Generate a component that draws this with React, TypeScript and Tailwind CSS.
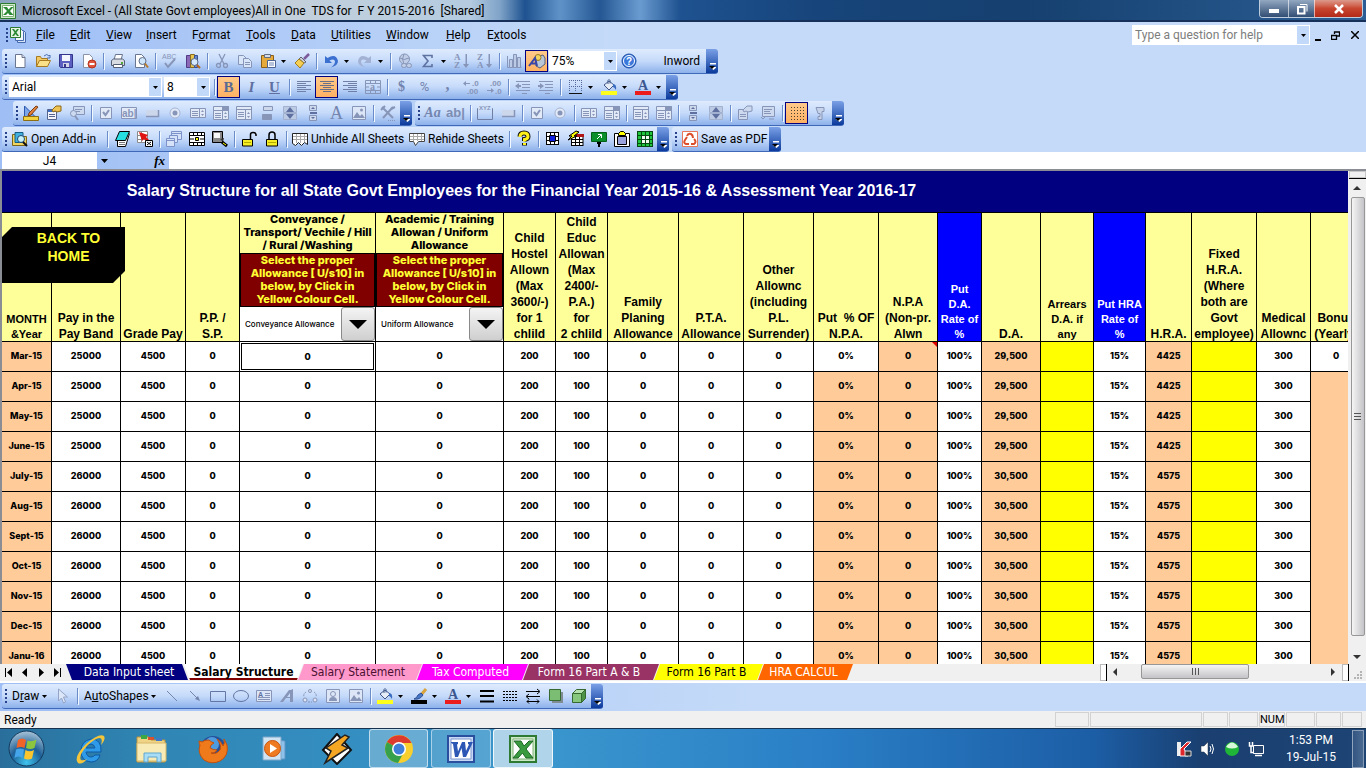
import type { ReactNode } from "react";

const G = "#8795b8";

const icons: Record<string, ReactNode> = {
  new: <><path d="M3.5 1.5h6.5l3 3v10h-9.5z" fill="#fff" stroke="#6a7590" /><path d="M10 1.5v3h3" fill="#d5dcea" stroke="#6a7590" /></>,
  open: <><path d="M1.5 13.5v-10h4l1 2h6v3" fill="#f3c963" stroke="#a77a22" /><path d="M1.5 13.5l3-6h11l-3 6z" fill="#fbe08a" stroke="#a77a22" /><path d="M9 3q3-3 5 0l1-1v3h-3" fill="none" stroke="#4a6fb0" /></>,
  save: <><path d="M1.5 1.5h13v13h-12l-1-1z" fill="#5b5fc0" stroke="#33368a" /><path d="M4 2h8v6h-8z" fill="#f3f5ff" /><path d="M5 10h6v4h-6z" fill="#d3d6e6" /><path d="M6 11h2v3h-2z" fill="#33368a" /></>,
  perm: <><path d="M2.5 1.5h6l3 3v10h-9z" fill="#fff" stroke="#8a93a8" /><circle cx="11" cy="11" r="4" fill="#e2553c" stroke="#b5331d" /><path d="M8.500 10h5v2h-5z" fill="#fff" /></>,
  print: <><path d="M4 7l1.5-5.500h7l-1.500 5.500z" fill="#fff" stroke="#687590" /><path d="M1.500 7.500l2-1.500h9l2 1.500v5h-13z" fill="#d8dbe2" stroke="#555f74" /><path d="M3.500 11.500h9v3h-9z" fill="#fff" stroke="#555f74" /><path d="M11 9h2v2h-2z" fill="#4fa83a" /></>,
  preview: <><path d="M2.500 1.500h6l3 3v10h-9z" fill="#fff" stroke="#6a7590" /><circle cx="9.500" cy="8" r="3.500" fill="#cfe6fa" stroke="#5d6c88" /><path d="M12 10.500l3 4" stroke="#b57a2d" strokeWidth="2" /></>,
  spell: <><text x="0" y="6" fontSize="7" fill={G} fontFamily="Liberation Sans">ABC</text><path d="M3 10l3 4 7-8" fill="none" stroke={G} strokeWidth="2" /></>,
  research: <><path d="M1.500 2.500h4v12h-4z" fill="#8b69b9" stroke="#533a85" /><path d="M5.500 1.500h4v13h-4z" fill="#e6c44e" stroke="#8b6b1e" /><path d="M9.500 2.500h3v12h-3z" fill="#6a86ce" stroke="#33508f" /><circle cx="9.500" cy="9" r="3.500" fill="#d6e9fb" stroke="#566a8c" /><path d="M12 12l3 3" stroke="#b5651d" strokeWidth="2" /></>,
  cut: <g fill="none" stroke={G} strokeWidth="1.300"><path d="M5 1l5 10M11 1l-5 10" /><circle cx="4.500" cy="12.500" r="2" /><circle cx="11.500" cy="12.500" r="2" /></g>,
  copy: <g fill="#d9e5f8" stroke={G}><path d="M1.500 2.500h5l3 3v6h-8z" /><path d="M6.500 5.500h5l3 3v6h-8z" /><path d="M8 9.500h5M8 11.500h5" /></g>,
  paste: <><path d="M1.500 2.500h12v12h-12z" fill="#e6a93c" stroke="#8c5f16" /><path d="M4.500 1.500h6v3h-6z" fill="#d8dce6" stroke="#616b80" /><path d="M7.500 7.500h8v7h-8z" fill="#fff" stroke="#4c6493" /><path d="M9 10h5M9 12h5" stroke="#6d86b6" /></>,
  painter: <><path d="M15 1l-5 5" stroke="#7c5a9c" strokeWidth="2.500" /><path d="M7 4l5 5-2 1-5-4z" fill="#cfcfd8" stroke="#5f6270" /><path d="M5 6l5 4-4 5-5-5z" fill="#f4cf54" stroke="#a17b1c" /></>,
  undo: <path d="M2 3v7h7L6.500 7.500q5-2.500 5.500 1 0 3-4 6 7-2 7-6.500Q13 0 4.500 5z" fill="#3b6fd0" />,
  redo: <path d="M14 3v7H7l2.500-2.500q-5-2.500-5.500 1 0 3 4 6-7-2-7-6.500Q3 0 11.500 5z" fill="#a3b2d4" />,
  link: <g fill="#c0cde6" stroke={G}><circle cx="7.500" cy="6" r="5" /><path d="M3 5q4 3 9 0M7 1q-3 5 0 10" fill="none" /><rect x="4.500" y="10.500" width="5" height="4" rx="2" /><rect x="9.500" y="10.500" width="5" height="4" rx="2" /></g>,
  sum: <path d="M12 5V2.500H3.500L8 8l-4.500 5.500H12V11" fill="none" stroke="#5f73a2" strokeWidth="1.600" />,
  az: <g fill={G}><text x="0" y="7" fontSize="9" fontFamily="Liberation Serif" fontWeight="bold">A</text><text x="0" y="15" fontSize="9" fontFamily="Liberation Serif" fontWeight="bold">Z</text><path d="M11.500 1h1.500v10h2l-3 4-3-4h2.500z" /></g>,
  za: <g fill={G}><text x="0" y="7" fontSize="9" fontFamily="Liberation Serif" fontWeight="bold">Z</text><text x="0" y="15" fontSize="9" fontFamily="Liberation Serif" fontWeight="bold">A</text><path d="M11.500 1h1.500v10h2l-3 4-3-4h2.500z" /></g>,
  chart: <g fill="#bccae6" stroke={G}><path d="M1.500 3v11.500h14" fill="none" /><path d="M3.500 6.500h3v8h-3zM7.500 1.500h3v13h-3zM11.500 4.500h3v10h-3z" /></g>,
  drawing: <><path d="M10 3l4-1 2 3v6l-5 4-4-2V6z" fill="#b9c6d8" stroke="#54607c" /><circle cx="9" cy="4.500" r="3" fill="#f2d462" stroke="#9a7b1f" /><path d="M0 13L6 5l2 8M2 10.500h5" fill="none" stroke="#3a46a8" strokeWidth="2" /></>,
  help: <><circle cx="8" cy="8" r="7" fill="#3a78dc" stroke="#1f4fa8" /><circle cx="8" cy="8" r="5.500" fill="none" stroke="#fff" /><text x="5" y="12" fontSize="10" fontWeight="bold" fill="#fff" fontFamily="Liberation Sans">?</text></>,
  left: <path d="M1 2.500h14M1 4.500h9M1 6.500h14M1 8.500h9M1 10.500h14M1 12.500h9" stroke="#6f7fa6" />,
  center: <path d="M1 2.500h14M4 4.500h8M1 6.500h14M4 8.500h8M1 10.500h14M4 12.500h8" stroke="#6a6f88" />,
  right: <path d="M1 2.500h14M6 4.500h9M1 6.500h14M6 8.500h9M1 10.500h14M6 12.500h9" stroke="#6f7fa6" />,
  merge: <g fill="none" stroke={G}><path d="M.500 1.500h15v13h-15zM.500 4.500h15M.500 11.500h15M5.500 1.500v3M10.500 1.500v3M5.500 11.500v3M10.500 11.500v3M1 8h3M12 8h3" /><text x="5" y="11" fontSize="10" fontWeight="bold" fill={G} stroke="none" fontFamily="Liberation Serif">a</text></g>,
  decInc: <g fill={G} fontSize="8" fontWeight="bold" fontFamily="Liberation Sans"><text x="9" y="7">.0</text><text x="4" y="15">.00</text><path d="M0 4.500l3-2.500v2h4v1h-4v2z" /></g>,
  decDec: <g fill={G} fontSize="8" fontWeight="bold" fontFamily="Liberation Sans"><text x="4" y="7">.00</text><text x="9" y="15">.0</text><path d="M8 11.500l-3-2.500v2h-4v1h4v2z" /></g>,
  outdent: <g stroke={G}><path d="M1 2.500h14M7 5.500h8M7 8.500h8M1 11.500h14M7 14.500h5" /><path d="M0 7l4-3v2h2v2h-2v2z" fill={G} stroke="none" /></g>,
  indent: <g stroke={G}><path d="M1 2.500h14M7 5.500h8M7 8.500h8M1 11.500h14M7 14.500h5" /><path d="M6 7l-4-3v2h-2v2h2v2z" fill={G} stroke="none" /></g>,
  borders: <><path d="M2.500 1v12M8.500 1v12M14.500 1v12M2 1.500h13M2 7.500h13" stroke="#55699c" strokeDasharray="1 1" /><path d="M2 14.500h13" stroke="#111" /></>,
  fill: <><path d="M0 12h16v4h-16z" fill="#ffff1e" /><path d="M3 6l5-4 5 4-5 5z" fill="#e7edf7" stroke="#3f5687" /><path d="M7 5V1.500q1-2 2 0v3" fill="none" stroke="#3f5687" /><path d="M12 5q4 0 3 6-2-3-3-3z" fill="#3b6dc2" /></>,
  fontColor: <><path d="M0 12h16v4h-16z" fill="#ec1c1c" /><text x="3" y="11" fontSize="14" fontWeight="bold" fill="#3c5690" fontFamily="Liberation Serif">A</text></>,
  brush: <><path d="M0 12h16v4h-16z" fill="#000" /><path d="M15 1l-5 6" stroke="#d8a33c" strokeWidth="3" /><path d="M10 5l2 2q-3 5-9 4 3-1 4-4z" fill="#4a78c8" stroke="#2c4f92" /></>,
  design: <><path d="M1.500 1v11h11z" fill="#7da6e8" stroke="#2c58ad" /><path d="M15 2l-7 8-3 1 1-3 7-7z" fill="#e2813a" stroke="#7b3d14" /><path d="M.500 11.500h15v4h-15z" fill="#f2d23f" stroke="#8d6f12" /></>,
  props: <><path d="M1.500 4.500h9v10h-9z" fill="#f4f6fb" stroke="#54648c" /><path d="M2 5h8v2h-8z" fill="#3c6bc4" /><path d="M3 9.500h6M3 11.500h6" stroke="#54648c" /><path d="M6 5l4-4h5v5l-4 1-2-1-2 1z" fill="#efc455" stroke="#8d6915" /></>,
  propsG: <g fill="#cdd9ee" stroke={G}><path d="M1.500 4.500h9v10h-9zM3 9.500h6M3 11.500h6" /><path d="M6 5l4-4h5v5l-4 1-2-1-2 1z" /></g>,
  code: <g fill="#cdd9ee" stroke={G}><path d="M4.500 1.500h11v8h-11zM6 4.500h7M6 6.500h5" /><circle cx="4.500" cy="8.500" r="3" /><path d="M6 11l3 4" strokeWidth="2" /></g>,
  codeG: <g fill="#cdd9ee" stroke={G}><path d="M2.500 1.500h12v10h-12zM4 4.500h8M4 6.500h6M4 8.500h7" /><path d="M1 12l2 2 2-2M9 14h5" fill="none" /></g>,
  check: <><path d="M2.500 2.500h11v11h-11z" fill="#e2eaf8" stroke={G} /><path d="M5 7l2.500 3L11 5" fill="none" stroke={G} strokeWidth="2" /></>,
  abl: <><path d="M.500 2.500h15v11h-15z" fill="#e2eaf8" stroke={G} /><text x="1" y="12" fontSize="10" fontWeight="bold" fill={G} fontFamily="Liberation Sans">ab|</text></>,
  btn: <><path d="M2 5h12v6H2z" fill="#ccd7eb" /><path d="M2 11.500h12.500V5" fill="none" stroke={G} strokeWidth="1.500" /></>,
  radio: <><circle cx="8" cy="8" r="5" fill="#e2eaf8" stroke="#a6b4d2" /><circle cx="8" cy="8" r="2.500" fill={G} /></>,
  list: <><path d="M.500 3.500h15v9h-15zM9.500 3.500v9" fill="#e2eaf8" stroke={G} /><path d="M2 6.500h6M2 8.500h6M2 10.500h6" stroke={G} /><path d="M11 7l1.500-2L14 7zM11 9l1.500 2L14 9z" fill={G} /></>,
  combo: <><path d="M.500 1.500h15v4h-15zM.500 5.500h9v9h-9zM9.500 1.500h6v13h-6z" fill="#e2eaf8" stroke={G} /><path d="M2 8.500h6M2 10.500h6M2 12.500h6" stroke={G} /><path d="M10 2h5v4h-5z" fill={G} /><path d="M11 9l1.500-2L14 9zM11 11l1.500 2L14 11z" fill={G} /></>,
  listbox: <><path d="M.500 1.500h15v13h-15zM.500 4.500h15M9.500 4.500v10" fill="#e2eaf8" stroke={G} /><path d="M2 7.500h6M2 9.500h6M2 11.500h6" stroke={G} /><path d="M11 9l1.500-2L14 9zM11 11l1.500 2L14 11z" fill={G} /></>,
  toggle: <><path d="M4.500 1.500h9v4h-9z" fill="#cdd8ec" stroke={G} /><path d="M3.500 9.500h9v5h-9z" fill={G} stroke={G} /></>,
  spin: <><path d="M1.500 1.500h13v6h-13zM1.500 8.500h13v6h-13z" fill="#bccae4" stroke="#a3b1d0" /><path d="M4 7l4-5 4 5zM4 9l4 5 4-5z" fill="#5f70a0" /></>,
  scroll: <><path d="M4.500.500h7v5h-7zM4.500 10.500h7v5h-7z" fill="#cdd8ec" stroke={G} /><path d="M5 7h7v2H5zM6 4l2-2 2 2zM6 12l2 2 2-2z" fill="#5f70a0" /></>,
  label: <text x="2" y="14" fontSize="18" fill="#7485ae" fontFamily="Liberation Serif">A</text>,
  image: <><path d="M1.500 1.500h13v13h-13z" fill="#dde6f6" stroke={G} /><path d="M2 13l4-6 3 4 2-2 3 4z" fill={G} /><circle cx="10.500" cy="5" r="1.500" fill={G} /></>,
  person: <><path d="M1.500 1.500h13v13h-13z" fill="#dde6f6" stroke={G} /><circle cx="8" cy="6" r="2.500" fill="none" stroke={G} /><path d="M4 13q0-4 4-4t4 4z" fill={G} /></>,
  tools: <g fill="none" stroke={G} strokeWidth="2"><path d="M2 2l11 11M13 2L3 13" /><path d="M1 5l4-4M11 4l4-2" /><path d="M8 15.500h7" strokeWidth="1" strokeDasharray="1 1" /></g>,
  frame: <><path d="M1 3.500H.500v11h15v-11H15" fill="none" stroke="#6f7fa6" /><text x="2" y="5" fontSize="6" fontWeight="bold" fill={G} fontFamily="Liberation Sans">XYZ</text></>,
  dots: <path d="M2 2.500h13M2 5.500h13M2 8.500h13M2 11.500h13M2 14.500h13" stroke="#4a4030" strokeDasharray="1 2" />,
  run: <path d="M4 2.500h8v4h-2v8H6v-3h2v-3H6z" fill="#c6d2ea" stroke={G} />,
  addin: <><path d="M.500 3.500h5l1 2h8v9h-14z" fill="#f1d561" stroke="#7d6519" /><path d="M3 1.500h8v10h-8z" fill="#41b2e0" stroke="#145d85" /><circle cx="9" cy="8" r="3.500" fill="#c8f2f8" stroke="#1d4774" /><path d="M11 11l4 4" stroke="#111" strokeWidth="2" /></>,
  book: <><path d="M3.500 9v6.500h8l4-13" fill="#fff" stroke="#000" /><path d="M5.500.500h10l-4 9h-10z" fill="#26dfe3" stroke="#000" /><path d="M5 11.500h6M5 13.500h6" stroke="#777" /></>,
  exportRed: <><path d="M.500.500h10v11h-10zM.500 4.500h10M4.500.500v11M.500 8.500h10" fill="#fff" stroke="#8b8b8b" /><path d="M2 1l9 3-2 2 4 4-2 2-4-4-2 2z" fill="#e01313" /><path d="M8.500 9.500h7v6h-7z" fill="#fff" stroke="#000" /><path d="M10 11l4 3M14 11l-4 3" stroke="#000" /></>,
  windows: <g fill="#d5e2f7" stroke="#7c92c8"><path d="M5.500.500h10v8h-10zM5 2.500h10" /><path d="M3.500 4.500h8v7h-8z" /><path d="M.500 7.500h8v8h-8zM.500 9.500h8" /></g>,
  fit: <><path d="M.500 1.500h15v13h-15z" fill="#fff" stroke="#000" /><path d="M1 4.500h14M1 11.500h14M4.500 2v3M8.500 2v3M12.500 2v3M4.500 11v3M8.500 11v3M12.500 11v3M1 8h4M11 8h4" stroke="#000" /><path d="M6.500 6.500h3v3h-3z" fill="#ff0" stroke="#000" /></>,
  torch: <><path d="M.500.500h10v11h-10z" fill="#888" stroke="#000" /><path d="M2 2h6v5h-6z" fill="#f8f8f8" /><path d="M8 8l3 3 1-4z" fill="#333" /><path d="M10 11l5 4" stroke="#000" strokeWidth="3" /><path d="M11 12l3 2" stroke="#ff0" /></>,
  unlock: <><path d="M9.500 8V3.500q0-2 2.500-2t3 2V5" fill="none" stroke="#000" strokeWidth="1.500" /><path d="M1.500 8.500h10v6.500h-10z" fill="#f6ee25" stroke="#000" /><path d="M3 11.500h7" stroke="#b5aa00" /></>,
  lock: <><path d="M5 8V4q0-3 3-3t3 3v4" fill="none" stroke="#000" strokeWidth="1.500" /><path d="M2.500 8.500h11v6.500h-11z" fill="#f6ee25" stroke="#000" /><path d="M4 11.500h8" stroke="#b5aa00" /></>,
  sheetTorn: <><path d="M.500 2.500h15v11l-3-2-3 3-3-3-3 3-3-2z" fill="#fff" stroke="#222" /><path d="M1 5.500h14M1 8.500h14M4.500 3v9M8.500 3v9M12.500 3v8" stroke="#a9a9a9" /></>,
  sheetTag: <><path d="M.500 2.500h15v8h-6l-3 4-2-4h-4z" fill="#fff" stroke="#444" /><path d="M1 5.500h14M1 8.500h14M4.500 3v7M8.500 3v7M12.500 3v7" stroke="#a9a9a9" /></>,
  question: <><path d="M4 5.500Q4 2 8 2t4 3.500Q12 8 8.500 8.500V10M8.500 12v2.500" fill="none" stroke="#111" strokeWidth="5" /><path d="M4 6Q4 2 8 2t4 3.500Q12 8 8.500 8.500V10.500M8.500 12v2" fill="none" stroke="#fff01a" strokeWidth="3" /></>,
  gridBlue: <><path d="M1 1h13v13h-13z" fill="#fff" /><path d="M5 5h5v5h-5z" fill="#1020e0" /><path d="M1.500 1v13M5.500 1v3M9.500 1v3M5.500 11v3M9.500 11v3M13.500 1v13M1 1.500h13M1 5.500h3M11 5.500h3M1 9.500h3M11 9.500h3M1 13.500h13M4.500 4.500h6v6h-6z" fill="none" stroke="#000" /></>,
  gridFlash: <><path d="M3 5h12v10h-12z" fill="#fff" /><path d="M3.500 5v10M7.500 5v10M11.500 5v10M15 5v10M3 8.500h12M3 11.500h12M3 14.500h12" stroke="#000" /><path d="M7 3h9v3h-9z" fill="#b31616" /><path d="M8 0L1 5h3l-4 4 9-4h-3l5-4z" fill="#ff0" stroke="#000" /></>,
  sign: <><path d="M.500 1.500h15v9h-15z" fill="#0a8f2a" stroke="#056017" /><path d="M6 8l4-4M7 3.500h3.500V7" fill="none" stroke="#fff" /><path d="M6 11h4v2h-1v3h-2v-3h-1z" fill="#000" /></>,
  clipboard: <><path d="M.500 2.500h15v13h-15z" fill="#fff" stroke="#000" /><path d="M4.500 2.500l2-2h3l2 2v2h-7z" fill="#ff0" stroke="#000" /><path d="M3.500 5.500h9v8h-9z" fill="#9aa3dc" stroke="#000" /></>,
  gridGreen: <><path d="M0 0h16v16H0z" fill="#1fc53c" /><path d="M5 5h7v7H5z" fill="#f2fbf2" /><path d="M.500 0v16M4.500 0v16M8.500 0v16M12.500 0v16M15.500 0v16M0 .500h16M0 4.500h16M0 8.500h16M0 12.500h16M0 15.500h16" stroke="#064a12" /></>,
  pdf: <><path d="M.500.500h15v15h-15z" fill="#fff" stroke="#e5775c" /><path d="M5 5q1-3 4-2 2 1 2 4M12 8q3 3 0 5H9M7 13H4q-3-1-1-4l2-3" fill="none" stroke="#dd4d2c" strokeWidth="2" /></>,
  pointer: <path d="M3.500 1v12l3-3 2 5 2-1-2-5h4z" fill="#dbe6f8" stroke="#94a3c6" />,
  line: <path d="M3 3l10 10" stroke="#7384ad" />,
  arrow: <><path d="M3 3l8 8" stroke="#7384ad" /><path d="M13 13l-5-2 3-3z" fill="#7384ad" /></>,
  rect: <path d="M.500 3.500h15v10h-15z" fill="none" stroke="#6376a4" />,
  oval: <ellipse cx="8" cy="8" rx="7.500" ry="5.500" fill="none" stroke="#6376a4" />,
  textbox: <><path d="M.500 2.500h15v11h-15zM9 5.500h5M9 7.500h5M2 9.500h12M2 11.500h12" fill="#dde6f6" stroke={G} /><text x="2" y="9" fontSize="7" fontWeight="bold" fill="#5f70a0" fontFamily="Liberation Sans">A</text></>,
  wordart: <path d="M1 14L10 2l2 0 2-1v13h-3V10H7l-3 4zM8 9h3V5z" fill={G} />,
  diagram: <g fill="#dde6f6" stroke={G}><circle cx="8" cy="3" r="1.500" /><circle cx="3" cy="12" r="2" /><circle cx="13" cy="12" r="2" /><path d="M4 4q-3 2-2 5M12 4q3 2 2 5M6 14h4" fill="none" strokeDasharray="2 1" /></g>,
  lines: <path d="M1 3h14M1 8h14M1 13.500h14" stroke="#000" strokeWidth="2" />,
  dashes: <path d="M1 3.500h15M1 6.500h15M1 9.500h15M1 12.500h15" stroke="#000" strokeDasharray="2 1" />,
  arrows: <path d="M1 3.500h13M12 1l3 2.500L12 6M15 8.500H2M4 6L1 8.500 4 11M2 13.500h12M4 11.500l-2 2 2 2M12 11.500l2 2-2 2" stroke="#000" fill="none" />,
  shadow: <><path d="M4 4h11v11h-11z" fill="#7f8c94" /><path d="M1.500 1.500h11v11h-11z" fill="#7cbd74" stroke="#35692f" /></>,
  cube: <><path d="M1.500 5.500h9v9h-9z" fill="#86c77d" stroke="#35692f" /><path d="M1.500 5.500l4-4h9l-4 4z" fill="#b4e0ac" stroke="#35692f" /><path d="M10.500 5.500l4-4v9l-4 4z" fill="#4d9245" stroke="#35692f" /></>,
  excel: <><path d="M.500.500h15v15h-15z" fill="#cfe8ca" stroke="#2d7a31" /><path d="M2.500 2.500h11v11h-11z" fill="#fff" stroke="#7db377" /><path d="M3 4h4l1.500 2.500L11 4h2.500L10 8l3.500 4h-4L8 10l-2 2H3l4-4z" fill="#2c8a35" /></>,
  book2: <><path d="M7.500 3.500h6l2 2v10h-8z" fill="#d8e6f8" stroke="#456ab0" /><path d="M5.500 2.500h6l2 2v9h-8z" fill="#f3f8ff" stroke="#456ab0" /><path d="M.500.500h10v10h-10z" fill="#e6f4e3" stroke="#2d7a31" /><path d="M2 2h2l1.500 2L7 2h2L6.500 5.500 9 9H7L5.500 7 4 9H2l2.500-3.500z" fill="#2c8a35" /></>,
};

function Svg({ n, cls = "w-4 h-4" }: { n: string; cls?: string }) {
  return <svg viewBox="0 0 16 16" className={`${cls} shrink-0 overflow-visible`} aria-hidden="true">{icons[n]}</svg>;
}

function Tool({ n, on, children }: { n?: string; on?: boolean; children?: ReactNode }) {
  return (
    <button
      aria-label={n}
      className={`w-[23px] h-[22px] shrink-0 flex items-center justify-center ${on ? "border border-[#000080] bg-gradient-to-b from-[#ffc98a] to-[#ffb163]" : ""}`}
    >
      {n ? <Svg n={n} /> : children}
    </button>
  );
}

function Tools({ list }: { list: string }) {
  return (
    <>
      {list.split(" ").map((n, i) => {
        if (n === "|") return <Sep key={i} />;
        if (n === "v") return <Caret key={i} />;
        return <Tool key={i} n={n} />;
      })}
    </>
  );
}

const Sep = () => (
  <span className="w-[6px] shrink-0 flex justify-center">
    <span className="w-px h-4 bg-[#6a8ccb] shadow-[1px_1px_0_#f1f9ff]" />
  </span>
);

const Caret = () => (
  <button aria-label="More" className="w-[11px] h-[22px] shrink-0 flex items-center">
    <svg viewBox="0 0 5 3" className="w-[5px] h-[3px] ml-[2px]"><path d="M0 0h5L2.500 3z" fill="#000" /></svg>
  </button>
);

const Grip = () => (
  <svg viewBox="0 0 6 16" className="w-[6px] h-4 shrink-0" shapeRendering="crispEdges">
    <path d="M3 1h2v2h-2zM3 5h2v2h-2zM3 9h2v2h-2zM3 13h2v2h-2z" fill="#27418b" />
  </svg>
);

function Bar({ children }: { children: ReactNode }) {
  return (
    <div className="h-[25px] flex items-stretch rounded-[3px] overflow-hidden bg-gradient-to-b from-[#dfebfd] via-[#c5dafa] to-[#8db1eb] border-b border-[#3f68b8]">
      <div className="flex items-center">{children}</div>
      <button aria-label="Toolbar options" className="w-[12px] flex items-end justify-center pb-[3px] ml-px bg-gradient-to-b from-[#7aa0e6] to-[#0b3a9c]">
        <svg viewBox="0 0 7 7" className="w-[7px] h-[7px]"><path d="M1 0h6v1.500H1zM1 4h7L4.500 7z" fill="#fff" /><path d="M0 3h6L3 6z" fill="#000" /></svg>
      </button>
    </div>
  );
}

function DropArrow() {
  return (
    <span className="w-3 h-full bg-[#c3d9f9] flex items-center justify-center pointer-events-none">
      <svg viewBox="0 0 5 3" className="w-[5px] h-[3px]"><path d="M0 0h5L2.500 3z" fill="#000" /></svg>
    </span>
  );
}

function Drop({ label, value, cls }: { label: string; value: string; cls: string }) {
  return (
    <label className={`${cls} h-5 bg-white border border-white flex items-center shrink-0`}>
      <select aria-label={label} className="appearance-none flex-1 min-w-0 pl-[2px] text-black outline-none">
        <option>{value}</option>
      </select>
      <DropArrow />
    </label>
  );
}

function Menu({ pre = "", hot, post, cls }: { pre?: string; hot: string; post: string; cls: string }) {
  return <button className={`${cls} text-left whitespace-nowrap`}>{pre}<u>{hot}</u>{post}</button>;
}

type Col = { w: string; h?: string; kind?: "blue" | "small"; v: (i: number) => string; bg?: (i: number) => string };

const peach = () => "bg-[#ffcc99]";
const months = ["Mar-15", "Apr-15", "May-15", "June-15", "July-15", "Aug-15", "Sept-15", "Oct-15", "Nov-15", "Dec-15", "Janu-16"];

const cols: Col[] = [
  { w: "w-[50px]", h: "MONTH\n&Year", kind: "small", v: (i) => months[i], bg: peach },
  { w: "w-[69px]", h: "Pay in the\nPay Band", v: (i) => (i < 4 ? "25000" : "26000") },
  { w: "w-[65px]", h: "Grade Pay", v: () => "4500" },
  { w: "w-[54px]", h: "P.P. /\nS.P.", v: () => "0" },
  { w: "w-[136px]", v: () => "0" },
  { w: "w-[128px]", v: () => "0" },
  { w: "w-[52px]", h: "Child\nHostel\nAllown\n(Max\n3600/-)\nfor 1\nchlild", v: () => "200" },
  { w: "w-[52px]", h: "Child\nEduc\nAllowan\n(Max\n2400/-\nP.A.)\nfor\n2 chlild", v: () => "100" },
  { w: "w-[71px]", h: "Family\nPlaning\nAllowance", v: () => "0" },
  { w: "w-[65px]", h: "P.T.A.\nAllowance", v: () => "0" },
  { w: "w-[70px]", h: "Other\nAllownc\n(including\nP.L.\nSurrender)", v: () => "0" },
  { w: "w-[65px]", h: "Put  % OF\nN.P.A.", v: () => "0%", bg: (i) => (i ? "bg-[#ffcc99]" : "") },
  { w: "w-[59px]", h: "N.P.A\n(Non-pr.\nAlwn", v: () => "0", bg: peach },
  { w: "w-[44px]", h: "Put\nD.A.\nRate of\n%", kind: "blue", v: () => "100%" },
  { w: "w-[59px]", h: "D.A.", v: (i) => (i < 4 ? "29,500" : "30,500"), bg: peach },
  { w: "w-[53px]", h: "Arrears\nD.A. if\nany", kind: "small", v: () => "", bg: () => "bg-[#ffff00]" },
  { w: "w-[52px]", h: "Put HRA\nRate of\n%", kind: "blue", v: () => "15%" },
  { w: "w-[46px]", h: "H.R.A.", v: (i) => (i < 4 ? "4425" : "4575"), bg: peach },
  { w: "w-[65px]", h: "Fixed\nH.R.A.\n(Where\nboth are\nGovt\nemployee)", v: () => "", bg: () => "bg-[#ffff00]" },
  { w: "w-[54px]", h: "Medical\nAllownc", v: () => "300" },
];

function Allowance({ title, value, label }: { title: string; value: string; label: string }) {
  return (
    <th className="p-0 align-bottom bg-[#ffff99] border-r border-b border-black font-['Inter',sans-serif] text-[11px] leading-[13px] font-extrabold">
      <div className="h-[40px] whitespace-pre">{title}</div>
      <div className="h-[54px] bg-[#800000] border border-black text-[#ffff33] whitespace-pre">
        {"Select the proper\nAllowance [ U/s10] in\nbelow, by Click in\nYellow Colour Cell."}
      </div>
      <label className="h-[34px] flex items-stretch bg-white font-medium">
        <select aria-label={label} className="appearance-none flex-1 min-w-0 pl-[5px] text-[8px] text-black outline-none">
          <option>{value}</option>
        </select>
        <span className="w-[34px] border border-[#8a8a8a] rounded-[3px] bg-gradient-to-b from-[#f4f4f4] to-[#cfcfcf] flex items-center justify-center pointer-events-none">
          <svg viewBox="0 0 18 9" className="w-[18px] h-[9px]"><path d="M0 0h18L9 9z" fill="#000" /></svg>
        </span>
      </label>
    </th>
  );
}

function Sheet() {
  return (
    <div className="flex-1 min-w-0 overflow-hidden relative bg-white">
      <table className="w-[1359px] table-fixed border-separate border-spacing-0 text-center font-['Liberation_Sans',Arial,sans-serif]">
        <colgroup>
          {cols.map((c, i) => <col key={i} className={c.w} />)}
          <col className="w-[50px]" />
        </colgroup>
        <thead>
          <tr className="h-[42px] bg-[#000080] text-white text-base font-bold">
            <th colSpan={15} className="p-0 pb-[2px] border-b border-black whitespace-nowrap">
              Salary Structure for all State Govt Employees for the Financial Year 2015-16 &amp; Assessment Year 2016-17
            </th>
            <th colSpan={6} className="p-0 border-b border-black" />
          </tr>
          <tr className="h-[129px]">
            {cols.map((c, i) => {
              if (i === 4) return <Allowance key={i} label="Conveyance allowance type" value="Conveyance Allowance" title={"Conveyance /\nTransport/ Vechile / Hill\n/ Rural /Washing"} />;
              if (i === 5) return <Allowance key={i} label="Uniform allowance type" value="Uniform Allowance" title={"Academic / Training\nAllowan / Uniform\nAllowance"} />;
              const look =
                c.kind === "blue" ? "bg-[#0000ff] text-white text-[11px] leading-[15px]"
                : c.kind === "small" ? "bg-[#ffff99] text-[11px] leading-[15px]"
                : "bg-[#ffff99] text-[12px] leading-4";
              return (
                <th key={i} className={`p-0 align-bottom whitespace-pre font-bold border-r border-b border-black ${look}`}>
                  <div className="-mb-px">{c.h}</div>
                </th>
              );
            })}
            <th className="p-0 align-bottom whitespace-pre font-bold border-b border-black bg-[#ffff99] text-[12px] leading-4">
              <div className="-mb-px">{"Bonus\n(Yearly)"}</div>
            </th>
          </tr>
        </thead>
        <tbody className="font-['Inter',sans-serif] text-[9px] leading-3 font-extrabold">
          {months.map((m, i) => (
            <tr key={m} className="h-[30px]">
              {cols.map((c, j) => (
                <td key={j} className={`p-0 pb-px border-r border-b border-black ${c.bg ? c.bg(i) : ""}`}>
                  {i === 0 && j === 4 ? <div className="h-[27px] mx-px mt-px border border-black flex items-center justify-center">0</div> : c.v(i)}
                </td>
              ))}
              {i === 0 && <td className="p-0 pb-px border-b border-black">0</td>}
              {i === 1 && <td rowSpan={10} className="p-0 bg-[#ffcc99]" />}
            </tr>
          ))}
        </tbody>
      </table>
      {/* comment marker on the N.P.A cell */}
      <svg viewBox="0 0 5 5" className="absolute left-[930px] top-[171px] w-[5px] h-[5px]"><path d="M0 0h5v5z" fill="#e00000" /></svg>
      <a href="#home" className="absolute left-0 top-14 w-[123px] h-[56px] pt-[2px] pl-[10px] bg-black text-[#ffff33] text-center text-sm leading-[18px] font-bold font-['Liberation_Sans',Arial,sans-serif] [clip-path:polygon(0_10px,10px_0,100%_0,100%_44px,111px_100%,0_100%)]">
        BACK TO<br />HOME
      </a>
    </div>
  );
}

function Arrow({ d }: { d: string }) {
  return <svg viewBox="0 0 9 9" className="w-[9px] h-[9px] shrink-0"><path d={d} fill="#333" /></svg>;
}

const tabs = [
  { t: "Data Input sheet", c: "w-[122px] pl-1 bg-[#000080] text-white [clip-path:polygon(0_0,calc(100%-6px)_0,100%_100%,6px_100%)]" },
  { t: "Salary Structure", c: "w-[119px] -ml-1 bg-white text-black font-bold border-b-2 border-[#800000] [clip-path:polygon(0_0,100%_0,calc(100%-6px)_100%,6px_100%)]" },
  { t: "Salary Statement", c: "w-[124px] pr-1 -ml-[5px] bg-[#ff99cc] text-[#4a1030] [clip-path:polygon(6px_0,100%_0,calc(100%-6px)_100%,0_100%)]" },
  { t: "Tax Computed", c: "w-[111px] pr-1 -ml-[5px] bg-[#ff00ff] text-white [clip-path:polygon(6px_0,100%_0,calc(100%-6px)_100%,0_100%)]" },
  { t: "Form 16 Part A & B", c: "w-[136px] pr-1 -ml-[5px] bg-[#993366] text-white [clip-path:polygon(6px_0,100%_0,calc(100%-6px)_100%,0_100%)]" },
  { t: "Form 16 Part B", c: "w-[109px] pr-1 -ml-[5px] bg-[#ffff00] text-black [clip-path:polygon(6px_0,100%_0,calc(100%-6px)_100%,0_100%)]" },
  { t: "HRA CALCUL", c: "w-[95px] pr-1 -ml-[5px] bg-[#ff6600] text-white [clip-path:polygon(6px_0,100%_0,calc(100%-6px)_100%,0_100%)]" },
];

const navs = ["M1 0h1v9H1zM8 0v9L3 4.500z", "M7 0v9L2 4.500z", "M2 0v9l5-4.500z", "M7 0h1v9H7zM1 0v9l5-4.500z"];

const statusCells = ["w-[34px]", "w-[112px]", "w-[25px]", "w-[29px]", "w-[26px]", "w-[29px]", "w-[25px]", "w-[20px]"];

function Taskbar() {
  return (
    <footer className="h-10 shrink-0 flex items-center border-t border-[#16324f] bg-[linear-gradient(90deg,#2a6f9c_0,#2f86b4_150px,#3a96cd_40%,#2a7fc6_60%,#1c5ea6_80%,#1a3f70_88%,#1d4474_100%)] text-white">
      <button aria-label="Start" className="ml-2 w-[37px] h-[38px]">
        <svg viewBox="0 0 37 37" className="w-[37px] h-[37px]">
          <defs>
            <radialGradient id="orb" cx=".5" cy=".9" r=".9"><stop offset="0" stopColor="#3fc3ee" /><stop offset=".5" stopColor="#1d5f96" /><stop offset="1" stopColor="#a9c4d8" /></radialGradient>
          </defs>
          <circle cx="18.500" cy="18.500" r="17.500" fill="url(#orb)" stroke="#123a5e" />
          <path d="M10 10q4-3 8 0l-1.500 8q-4-2-8 0z" fill="#f0642a" />
          <path d="M19.500 10.500q4 2 9-1l-2 8.500q-4 2-8.500 0z" fill="#8cc63f" />
          <path d="M8 19.500q4-2 8 0L14.500 28q-4-3-8 0z" fill="#44a5ea" />
          <path d="M17.500 20q4 2.500 8.500 0l-2 8.500q-4 2-8 0z" fill="#fbc52e" />
        </svg>
      </button>
      <div className="flex-1 flex items-center">
        <button aria-label="Internet Explorer" className="w-[62px] ml-[14px] flex justify-center">
          <svg viewBox="0 0 32 32" className="w-8 h-8">
            <path d="M27 19H12q1 5 5 5 3 0 4-2h5q-2 7-9 7-10-1-10-11T17 6q11 0 10 13zM12 15h9q-1-4-4-4-4 0-5 4z" fill="#2f9be8" stroke="#0d5aa5" />
            <path d="M4 30Q-1 24 12 11 25 0 30 3q2 3-3 9 2-6-1-7-5 0-13 8Q4 23 7 27q2 1 6-1-5 6-9 4z" fill="#f4c53a" />
          </svg>
        </button>
        <button aria-label="Explorer" className="w-[61px] flex justify-center">
          <svg viewBox="0 0 34 32" className="w-[34px] h-8">
            <path d="M2 4h12l2 3h14v22H2z" fill="#f0d486" stroke="#b8913c" />
            <path d="M6 2h6v4H6z" fill="#3aa844" /><path d="M13 4h6v3h-6z" fill="#d9542e" /><path d="M21 5h6v3h-6z" fill="#3d79c9" />
            <path d="M2 10h29v18H2z" fill="#f9ebb5" stroke="#d7b868" />
            <path d="M9 29v-9h17v9h-4v-5h-9v5z" fill="#a9dcf5" stroke="#5ea7cf" />
          </svg>
        </button>
        <button aria-label="Firefox" className="w-[62px] flex justify-center">
          <svg viewBox="0 0 32 32" className="w-8 h-8">
            <circle cx="16" cy="16" r="13" fill="#24519b" /><circle cx="15" cy="11" r="7" fill="#4f9be0" />
            <path d="M2 8q0 3 1 4Q0 20 7 27q8 5 16 1 9-5 7-16l-3-6q1 5-1 7-2-5-6-7 5 6 3 11-4 5-9 3 5 0 6-3-4 0-7-2l1-3 3-2q-3-1-5-3Q7 7 5 9z" fill="#ee7a1c" stroke="#c4500d" />
          </svg>
        </button>
        <button aria-label="Media Player" className="w-[61px] flex justify-center">
          <svg viewBox="0 0 28 28" className="w-7 h-7">
            <path d="M8 4l16 2v18H8z" fill="#8fc2ea" stroke="#5c93c4" /><path d="M2 2h18v23H2z" fill="#cfe3f3" stroke="#7ea7c9" />
            <circle cx="11.500" cy="13.500" r="8" fill="#ee7a22" stroke="#c9540d" /><path d="M9 9l7 4.500L9 18z" fill="#fff" />
          </svg>
        </button>
        <button aria-label="Winamp" className="w-[64px] flex justify-center">
          <svg viewBox="0 0 32 32" className="w-8 h-8">
            <path d="M16 1L2 17l14 14 14-14z" fill="#fff" stroke="#111" strokeWidth="2" />
            <path d="M24 2L5 15l5 3-6 12 23-15-6-3 7-8z" fill="#f5a623" stroke="#222" strokeWidth="1.500" />
          </svg>
        </button>
        <button aria-label="Chrome" className="w-[59px] h-[39px] rounded-[3px] border border-white/60 bg-white/25 flex items-center justify-center">
          <svg viewBox="0 0 30 30" className="w-[30px] h-[30px]">
            <circle cx="15" cy="15" r="14" fill="#f9cf2e" />
            <path d="M15 15L2.900 8A14 14 0 0 1 27.500 9H15z" fill="#dd3b2d" />
            <path d="M15 15L2.900 8A14 14 0 0 0 14 29l6-11z" fill="#37a04a" />
            <circle cx="15" cy="15" r="7" fill="#fff" /><circle cx="15" cy="15" r="5.500" fill="#3f7fd9" />
          </svg>
        </button>
        <button aria-label="Word" className="w-[60px] h-[39px] ml-[3px] rounded-[3px] border border-white/50 bg-white/15 flex items-center justify-center">
          <svg viewBox="0 0 28 28" className="w-7 h-7">
            <path d="M1 1h26v26H1z" fill="#c7d8f5" stroke="#2a4f9f" strokeWidth="2" /><path d="M4 4h20v20H4z" fill="#fff" stroke="#7c97cf" />
            <path d="M4 7h7v2l-1 .5 1 7L15 7h3l1 9 3-6.500-1-.5V7h5l-1 2-6 13h-3l-1.500-9L11 22H8L6 9 4 8z" fill="#2d57b5" />
          </svg>
        </button>
        <button aria-label="Excel" className="w-[60px] h-[39px] ml-[2px] rounded-[3px] border border-white/80 bg-white/60 flex items-center justify-center">
          <svg viewBox="0 0 28 28" className="w-7 h-7">
            <path d="M1 1h26v26H1z" fill="#cde8c6" stroke="#2f7a33" strokeWidth="2" /><path d="M4 4h20v20H4z" fill="#fff" stroke="#7db377" />
            <path d="M5 6h7l3 5 5-5h4l-7 8 7 9h-7l-3.500-5L9 23H4l7.500-9z" fill="#3a9a40" stroke="#1e6a25" />
          </svg>
        </button>
      </div>
      <div className="flex items-center gap-2 mr-[22px]">
        <svg viewBox="0 0 16 16" className="w-4 h-4"><path d="M1 1h4v14H1z" fill="#eee" /><path d="M4 8l7-7h4L8 8l4 7H4z" fill="#e0262a" stroke="#fff" /><path d="M9 10h6v5H9z" fill="#333" stroke="#ddd" /></svg>
        <svg viewBox="0 0 16 16" className="w-4 h-4"><path d="M1 5h3l4-4v14l-4-4H1z" fill="#fff" stroke="#234" strokeWidth=".5" /><path d="M10 5q2 3 0 6M12 3q3 5 0 10" fill="none" stroke="#fff" /></svg>
        <svg viewBox="0 0 16 16" className="w-4 h-4"><circle cx="8" cy="8" r="7" fill="#1fb637" /><path d="M2 6q6-9 12 0-6 3-12 0z" fill="#d8f8da" /></svg>
        <svg viewBox="0 0 16 16" className="w-4 h-4"><path d="M5.500 4.500h10v8h-10z" fill="#26466f" stroke="#fff" /><path d="M7 14.500h7M1.500 1v4h3V1M3 5v6.500h3" fill="none" stroke="#fff" strokeWidth="1.500" /></svg>
      </div>
      <div className="w-[50px] text-center text-[12px] leading-[17px] whitespace-nowrap">
        1:53 PM<br />19-Jul-15
      </div>
      <button aria-label="Show desktop" className="ml-4 mr-[2px] w-3 h-[38px] border border-white/40 bg-gradient-to-r from-white/10 to-white/20" />
    </footer>
  );
}

export default function App() {
  return (
    <div className="h-screen min-w-[1000px] flex flex-col overflow-hidden bg-[#f0f0f0] text-black text-[12px] leading-4 font-['Roboto',sans-serif]">
      <header className="h-[22px] shrink-0 flex items-start border-b-2 border-[#16305a] bg-[linear-gradient(90deg,#8aa3be_0,#aebfd0_120px,#c3d0dc_300px,#b4cbe0_470px,#7fa3c8_500px,#1e5290_525px,#5f93c8_560px,#245793_600px,#6a9bd0_640px,#1e5290_680px,#17447a_60%,#15406f_75%,#2b5d94_100%)]">
        <Svg n="excel" cls="w-4 h-4 mt-[3px]" />
        <h1 className="flex-1 pl-[6px] pt-[3px] whitespace-pre">Microsoft Excel - (All State Govt employees)All in One  TDS for  F Y 2015-2016  [Shared]</h1>
        <div className="flex h-[18px] mr-[3px] rounded-b-[4px] overflow-hidden border border-t-0 border-white/70">
          <button aria-label="Minimize" className="w-7 bg-gradient-to-b from-[#93a8c1] to-[#324e73] flex items-center justify-center"><span className="w-[10px] h-1 bg-white mt-1" /></button>
          <button aria-label="Restore" className="w-[26px] border-l border-white/60 bg-gradient-to-b from-[#93a8c1] to-[#324e73] flex items-center justify-center">
            <svg viewBox="0 0 12 12" className="w-3 h-3"><path d="M4 1.500h7v7" fill="none" stroke="#fff" /><path d="M2 4h6.500v6.500H2z" fill="none" stroke="#fff" strokeWidth="2" /></svg>
          </button>
          <button aria-label="Close" className="w-[48px] border-l border-white/60 bg-gradient-to-b from-[#dc9a8c] via-[#c8452f] to-[#b22a18] flex items-center justify-center">
            <svg viewBox="0 0 12 10" className="w-3 h-[10px]"><path d="M2 1l8 8M10 1L2 9" stroke="#fff" strokeWidth="2.500" /></svg>
          </button>
        </div>
      </header>

      <div className="shrink-0 bg-[linear-gradient(90deg,#9ebef5_0,#c4daf8_45%,#c4daf8_100%)]">
        <nav className="h-[27px] flex items-center pl-[3px] pb-px">
          <Grip />
          <Svg n="book2" cls="w-[18px] h-4 mr-[9px]" />
          <Menu hot="F" post="ile" cls="w-[34px]" />
          <Menu hot="E" post="dit" cls="w-[36px]" />
          <Menu hot="V" post="iew" cls="w-10" />
          <Menu hot="I" post="nsert" cls="w-[46px]" />
          <Menu pre="F" hot="o" post="rmat" cls="w-[54px]" />
          <Menu hot="T" post="ools" cls="w-[45px]" />
          <Menu hot="D" post="ata" cls="w-10" />
          <Menu hot="U" post="tilities" cls="w-[55px]" />
          <Menu hot="W" post="indow" cls="w-[60px]" />
          <Menu hot="H" post="elp" cls="w-[41px]" />
          <Menu pre="E" hot="x" post="tools" cls="w-[45px]" />
          <div className="ml-auto flex items-center">
            <label className="w-[178px] h-5 bg-white border border-white flex items-center">
              <input aria-label="Type a question for help" placeholder="Type a question for help" className="flex-1 min-w-0 pl-[2px] placeholder:text-[#7d7d7d] outline-none" />
              <DropArrow />
            </label>
            <button aria-label="Minimize window" className="w-4 h-3 flex items-end justify-center"><span className="w-[6px] h-[2px] bg-black" /></button>
            <button aria-label="Restore window" className="w-[18px] flex justify-center">
              <svg viewBox="0 0 9 9" className="w-[9px] h-[9px]"><path d="M3.500 3V1h5v4H6M.500 4.500h5v4h-5z" fill="none" stroke="#000" strokeWidth="1.300" /></svg>
            </button>
            <button aria-label="Close window" className="w-[22px] flex justify-center">
              <svg viewBox="0 0 8 8" className="w-2 h-2"><path d="M0 0l8 8M8 0L0 8" stroke="#000" strokeWidth="1.500" /></svg>
            </button>
          </div>
        </nav>
        <div className="flex flex-col gap-px pl-[2px]">
          <div className="flex">
            <Bar>
              <Grip />
              <Tools list="new open save perm | print preview | spell research | cut copy paste v painter | undo v redo v | link sum v az za | chart" />
              <Tool n="drawing" on />
              <Drop label="Zoom" value="75%" cls="w-[68px] ml-px" />
              <Tool n="help" />
              <button className="w-[65px] text-right pr-[5px]">Inword</button>
            </Bar>
          </div>
          <div className="flex">
            <Bar>
              <Grip />
              <Drop label="Font" value="Arial" cls="w-[153px] ml-px" />
              <Drop label="Font size" value="8" cls="w-[46px] ml-[2px] mr-px" />
              <Sep />
              <Tool on><b className="font-['Liberation_Serif',serif] text-[15px] text-[#5b6a92]">B</b></Tool>
              <Tool><b className="font-['Liberation_Serif',serif] text-[15px] italic text-[#5f70a0]">I</b></Tool>
              <Tool><b className="font-['Liberation_Serif',serif] text-[15px] underline text-[#5f70a0]">U</b></Tool>
              <Sep />
              <Tool n="left" />
              <Tool n="center" on />
              <Tools list="right merge |" />
              <Tool><b className="font-['Liberation_Serif',serif] text-sm text-[#7284ae]">$</b></Tool>
              <Tool><span className="text-[13px] text-[#7284ae]">%</span></Tool>
              <Tool><b className="font-['Liberation_Serif',serif] text-base leading-3 pb-1 text-[#7284ae]">,</b></Tool>
              <Tools list="decInc decDec | outdent indent | borders v fill v fontColor v" />
            </Bar>
          </div>
          <div className="flex gap-[3px] pl-[11px]">
            <Bar>
              <Grip />
              <Tools list="design props code | check abl btn radio list combo listbox toggle spin scroll label image | tools" />
            </Bar>
            <Bar>
              <Grip />
              <Tool><b className="italic font-['Liberation_Serif',serif] text-sm text-[#7284ae]">Aa</b></Tool>
              <Tool><span className="font-['Liberation_Sans',sans-serif] text-[13px] font-bold text-[#7d8db4]">ab|</span></Tool>
              <Tools list="| frame btn | check radio | list combo | listbox combo | scroll spin | propsG codeG |" />
              <Tool n="dots" on />
              <Tool n="run" />
            </Bar>
          </div>
          <div className="flex gap-[3px]">
            <Bar>
              <Grip />
              <button className="flex items-center gap-[3px] pl-1 pr-1 whitespace-nowrap w-[96px]"><Svg n="addin" />Open Add-in</button>
              <Tools list="| book exportRed | windows fit torch | unlock lock |" />
              <button className="flex items-center gap-[3px] pl-[3px] w-[117px] whitespace-nowrap"><Svg n="sheetTorn" />Unhide All Sheets</button>
              <button className="flex items-center gap-[3px] pl-[3px] w-[100px] whitespace-nowrap"><Svg n="sheetTag" />Rehide Sheets</button>
              <Tools list="| question | gridBlue gridFlash sign clipboard gridGreen" />
            </Bar>
            <Bar>
              <Grip />
              <button className="flex items-center gap-[3px] pl-1 w-[90px] whitespace-nowrap"><Svg n="pdf" />Save as PDF</button>
            </Bar>
          </div>
        </div>
        <div className="h-[17px] flex items-stretch pl-[2px]">
          <input aria-label="Name box" defaultValue="J4" className="w-[95px] bg-white text-center text-[12px] outline-none" />
          <button aria-label="Names" className="w-[15px] flex items-center pl-1"><svg viewBox="0 0 7 4" className="w-[7px] h-1"><path d="M0 0h7L3.500 4z" /></svg></button>
          <button aria-label="Insert function" className="w-[57px] text-right pr-1 italic font-bold text-[13px] leading-4 font-['Liberation_Serif',serif]">fx</button>
          <input aria-label="Formula" className="flex-1 bg-white outline-none" />
        </div>
      </div>

      <main className="flex-1 min-h-0 flex border-t-2 border-l-2 border-[#8a8d93]">
        <Sheet />
        <div className="w-[18px] shrink-0 flex flex-col items-center bg-[#f0f0f0] pl-px">
          <div className="w-full h-[7px] bg-[#f0f0f0] border border-[#c8c8c8]" />
          <div className="w-full h-px bg-black" />
          <button aria-label="Scroll up" className="h-[18px] flex items-center"><Arrow d="M0 6l4-4 4 4z" /></button>
          <div className="w-[14px] flex-1 rounded-[2px] border border-[#979797] bg-gradient-to-r from-[#f5f5f5] to-[#c4c4c8] flex flex-col items-center justify-center gap-[2px]">
            <span className="w-[7px] h-px bg-[#555]" /><span className="w-[7px] h-px bg-[#555]" /><span className="w-[7px] h-px bg-[#555]" />
          </div>
          <button aria-label="Scroll down" className="h-7 flex items-end pb-[3px]"><Arrow d="M0 3l4 4 4-4z" /></button>
        </div>
      </main>

      <div className="h-[17px] shrink-0 flex bg-[#f0f0f0] font-['DejaVu_Sans_Condensed','DejaVu_Sans',sans-serif]">
        <div className="w-[66px] flex items-center justify-between pl-1 pr-1">
          {navs.map((d) => <button key={d} aria-label="Sheet navigation" className="flex"><svg viewBox="0 0 9 9" className="w-[9px] h-[9px]"><path d={d} /></svg></button>)}
        </div>
        <div className="flex-1 flex h-4">
          {tabs.map((t) => <button key={t.t} className={`${t.c} shrink-0 text-[12px] leading-4 whitespace-nowrap`}>{t.t}</button>)}
        </div>
        <div className="w-[266px] flex items-stretch">
          <span className="w-[6px] border border-[#bbb] bg-white border-r-0" />
          <span className="w-px bg-black" />
          <button aria-label="Scroll left" className="w-[34px] flex items-center pl-1"><Arrow d="M6 0v8L2 4z" /></button>
          <div className="w-[108px] h-[15px] rounded-[2px] border border-[#979797] bg-gradient-to-b from-[#f5f5f5] to-[#c4c4c8] flex items-center justify-center gap-[2px]">
            <span className="w-px h-[7px] bg-[#555]" /><span className="w-px h-[7px] bg-[#555]" /><span className="w-px h-[7px] bg-[#555]" />
          </div>
          <button aria-label="Scroll right" className="flex-1 flex items-center justify-end pr-1"><Arrow d="M2 0v8l4-4z" /></button>
          <span className="w-[6px] border border-[#bbb] bg-white border-r-0" />
          <span className="w-px bg-black" />
          <span className="w-[17px] flex items-end justify-end pr-1 pb-[2px]">
            <svg viewBox="0 0 8 8" className="w-2 h-2"><path d="M6 0h2v2H6zM3 3h2v2H3zM6 3h2v2H6zM0 6h2v2H0zM3 6h2v2H3zM6 6h2v2H6z" fill="#b4b4b4" /></svg>
          </span>
        </div>
      </div>

      <div className="h-[30px] shrink-0 pt-px pl-[2px] border-t-2 border-white bg-[linear-gradient(90deg,#9ebef5_0,#c4daf8_55%,#c4daf8_100%)] flex items-start">
        <Bar>
          <Grip />
          <button className="w-[32px] pl-1 text-left whitespace-nowrap">D<u>r</u>aw</button>
          <Caret />
          <Tools list="pointer |" />
          <button className="w-[69px] pl-1 text-left whitespace-nowrap">A<u>u</u>toShapes</button>
          <Caret />
          <Tools list="line arrow rect oval textbox wordart diagram person image | fill v brush v fontColor v lines dashes arrows shadow cube" />
        </Bar>
      </div>

      <div className="h-[17px] shrink-0 flex items-center bg-[#f0f0f0] pl-1 pr-1">
        <span className="flex-1">Ready</span>
        <div className="flex gap-px">
          {statusCells.map((w, i) => <span key={i} className={`${w} h-[15px] border border-[#d2d2d2] text-center leading-[14px] text-[11px]`}>{i === 4 ? "NUM" : ""}</span>)}
        </div>
      </div>

      <Taskbar />
    </div>
  );
}
